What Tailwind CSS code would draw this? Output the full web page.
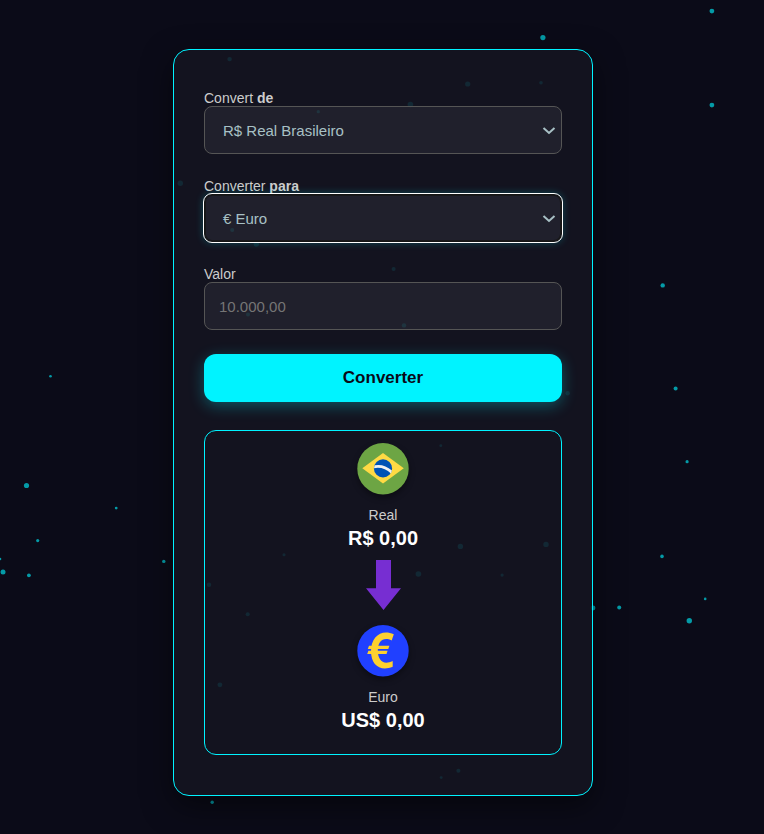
<!DOCTYPE html>
<html lang="pt-BR">
<head>
<meta charset="UTF-8">
<title>Conversor de Moedas</title>
<script src="https://cdn.jsdelivr.net/npm/@tailwindcss/browser@4"></script>
</head>
<body class="relative isolate flex h-[834px] items-start justify-center overflow-hidden bg-[#0b0b18] pt-[49px] pl-[2px] font-['Liberation_Sans',Arial,sans-serif] text-[#cccccc]">
<svg class="absolute inset-0 -z-10" width="764" height="834" fill="#00f3ff" fill-opacity=".62" aria-hidden="true">
  <circle cx="711.9" cy="11.1" r="2.4"/><circle cx="542.9" cy="37.6" r="2.6"/><circle cx="711.9" cy="105.1" r="2.4"/>
  <circle cx="662.7" cy="285.4" r="2.2"/><circle cx="675.6" cy="388.6" r="2"/><circle cx="687.1" cy="461.7" r="1.6"/>
  <circle cx="662" cy="556.4" r="1.8"/><circle cx="705.2" cy="598.9" r="1.3"/><circle cx="619.2" cy="607.4" r="2"/>
  <circle cx="689.3" cy="620.8" r="2.7"/><circle cx="593" cy="608" r="2.4"/>
  <circle cx="50.5" cy="376.3" r="1.3"/><circle cx="26.5" cy="485.5" r="2.6"/><circle cx="116.2" cy="508.1" r="1.4"/>
  <circle cx="37.7" cy="540.6" r="1.6"/><circle cx="0" cy="559" r="1.3"/><circle cx="3" cy="572" r="2.5"/>
  <circle cx="28.9" cy="575.3" r="1.9"/><circle cx="163.8" cy="561.4" r="1.7"/><circle cx="212.2" cy="802.2" r="1.7"/>
  <circle cx="229.6" cy="59.1" r="2.2"/><circle cx="467.7" cy="84" r="2.6"/><circle cx="541" cy="82.7" r="1.8"/>
  <circle cx="410.4" cy="104.5" r="2.8"/><circle cx="318.3" cy="111.7" r="1.6"/><circle cx="180.3" cy="183.3" r="2.7"/>
  <circle cx="232.2" cy="230" r="2"/><circle cx="256.3" cy="244" r="2.7"/><circle cx="393.6" cy="269.1" r="2"/>
  <circle cx="404" cy="325.4" r="2.2"/><circle cx="248" cy="314.6" r="2"/><circle cx="567.7" cy="393.3" r="2.2"/>
  <circle cx="440.8" cy="445.7" r="1.4"/><circle cx="284" cy="554.7" r="1.5"/><circle cx="209" cy="584.8" r="2.2"/>
  <circle cx="247.7" cy="614.2" r="2"/><circle cx="219.9" cy="684.8" r="2.4"/><circle cx="418.4" cy="574" r="2.8"/>
  <circle cx="460.4" cy="546.4" r="2.7"/><circle cx="546" cy="544.4" r="2.7"/><circle cx="502.1" cy="575.1" r="1.6"/>
  <circle cx="458.4" cy="770.8" r="2"/><circle cx="441.2" cy="777.6" r="1.4"/>
</svg>

<main class="flex h-[747px] w-[420px] flex-col rounded-[16px] border border-[#00f3ff] bg-[#151521]/86 px-[30px] py-10 shadow-[0_10px_30px_rgba(0,0,0,0.5)]">
  <form class="flex flex-col">
    <label class="h-4 text-[14px] leading-4">Convert <b>de</b></label>
    <div class="flex h-12 items-center justify-between rounded-lg border border-[#555555] bg-white/6 pt-[2px] pr-[5px] pl-[18px] text-[15px] text-[#a8c0c5]">
      <span>R$ Real Brasileiro</span>
      <svg width="14" height="10" viewBox="0 0 14 10" fill="none" stroke="#a8c0c5" stroke-width="2"><path d="M1.5 2 7 7 12.5 2"/></svg>
    </div>

    <label class="mt-6 h-4 text-[14px] leading-4">Converter <b>para</b></label>
    <div class="flex h-12 items-center justify-between rounded-lg border border-[#151515] bg-white/6 pt-[2px] pr-[5px] pl-[18px] text-[15px] text-[#a8c0c5] shadow-[0_0_8px_rgba(0,243,255,0.3),inset_0_0_0_1px_#18181a] outline-1 outline-white">
      <span>€ Euro</span>
      <svg width="14" height="10" viewBox="0 0 14 10" fill="none" stroke="#a8c0c5" stroke-width="2"><path d="M1.5 2 7 7 12.5 2"/></svg>
    </div>

    <label for="valor" class="mt-6 h-4 text-[14px] leading-4">Valor</label>
    <input id="valor" placeholder="10.000,00" class="h-12 rounded-lg border border-[#555555] bg-white/6 px-[14px] text-[15px] placeholder:text-[#757575]">

    <button type="button" class="mt-6 h-12 rounded-xl bg-[#00f3ff] pb-px text-[17px] font-bold text-[#0a0a17] shadow-[0_4px_15px_rgba(0,243,255,0.3)]">Converter</button>
  </form>

  <section class="mt-7 flex h-[325px] flex-col items-center rounded-xl border border-[#00f3ff] pt-3">
    <svg class="h-[52px] w-[52px] drop-shadow-[0_3px_3px_rgba(0,0,0,0.4)]" viewBox="0 0 52 52">
      <circle cx="26" cy="25.7" r="25.7" fill="#6da544"/>
      <path d="M5.3 25.2 26 10 46.8 25.2 26 40.6Z" fill="#ffda44"/>
      <circle cx="26" cy="25.4" r="9.1" fill="#0052b4"/>
      <path d="M17.6 22.3Q27 20.4 34.9 27.6L34 30.4Q26.5 23.4 17 25.2Z" fill="#f0f0f0"/>
    </svg>
    <p class="mt-3 h-4 text-[14px] leading-4">Real</p>
    <p class="mt-[3px] h-6 text-[20px] leading-6 font-bold text-white">R$ 0,00</p>
    <svg class="mt-[10px]" width="36" height="50" viewBox="0 0 36 50"><path d="M11 0h15v28.3h10L18.5 50 1 28.3h10Z" fill="#772ed2"/></svg>
    <svg class="mt-[15px] h-[52px] w-[52px] drop-shadow-[0_3px_3px_rgba(0,0,0,0.4)]" viewBox="0 0 52 52">
      <circle cx="26" cy="25.7" r="25.7" fill="#2040ff"/>
      <g fill="#fdd02f">
        <path d="M36.8 9.2 34.7 15.4C26.5 11.2 20.8 16.2 20.8 25.3c0 10.3 5.6 15.2 14.9 10.7v5.8C23.3 46.6 14 40.2 14 26.2 14 11.4 24.6 3.6 36.8 9.2Z"/>
        <path d="M12 20.8H32.4L31.3 24H10.8ZM11.4 25.8H30.6L29.5 29H10.2Z"/>
      </g>
    </svg>
    <p class="mt-3 h-4 text-[14px] leading-4">Euro</p>
    <p class="mt-[3px] h-6 text-[20px] leading-6 font-bold text-white">US$ 0,00</p>
  </section>
</main>
</body>
</html>
